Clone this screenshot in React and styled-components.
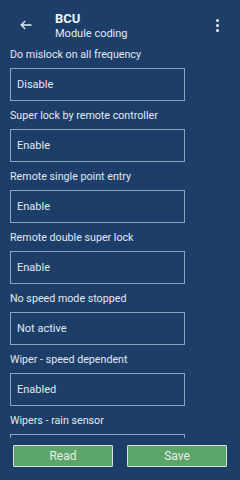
import React from 'react'
import styled, { createGlobalStyle } from 'styled-components'

const Global = createGlobalStyle`
html, body {
  margin: 0;
  padding: 0;
  background: #1c3e69;
}
* { box-sizing: border-box; }
`

const Screen = styled.div`
width: 240px;
height: 480px;
background: #1c3e69;
display: flex;
flex-direction: column;
font-family: Roboto, "Liberation Sans", sans-serif;
color: #e4eaf2;
overflow: hidden;
`

const Header = styled.div`
height: 47px;
display: flex;
align-items: center;
padding: 0 0 0 20px;
flex-shrink: 0;
`

const Back = styled.div`
width: 12px;
height: 12px;
display: flex;
align-items: center;
justify-content: center;
margin-top: 3px;
`

const Titles = styled.div`
flex: 1;
display: flex;
flex-direction: column;
margin-left: 23px;
margin-top: 5px;
`

const Title = styled.div`
font-size: 13px;
font-weight: 700;
line-height: 16px;
color: #f2f5f9;
`

const Sub = styled.div`
font-size: 11px;
line-height: 14px;
color: #e4eaf2;
`

const Menu = styled.div`
width: 4px;
display: flex;
flex-direction: column;
gap: 2px;
margin-right: 20px;
margin-top: 3px;
`

const Dot = styled.span`
width: 3px;
height: 3px;
border-radius: 50%;
background: #eef2f7;
`

const List = styled.div`
flex: 1;
overflow: hidden;
padding: 0 55px 0 10px;
`

const Field = styled.div`
display: flex;
flex-direction: column;
margin-bottom: 7px;
`

const Label = styled.div`
font-size: 10.7px;
line-height: 14px;
height: 21px;
padding-top: 1px;
color: #e2e8f0;
`

const Box = styled.div`
height: 33px;
border: 1px solid #8ea3bf;
display: flex;
align-items: center;
padding-left: 6px;
font-size: 11px;
color: #e2e8f0;
`

const Footer = styled.div`
height: 42px;
flex-shrink: 0;
display: flex;
gap: 14px;
padding: 7px 13px 13px 13px;
background: #1c3e69;
`

const Button = styled.button`
flex: 1;
height: 22px;
border: 1px solid #d3e4dc;
border-radius: 1px;
background: #5ba56a;
color: #e6efe2;
font-family: Roboto, "Liberation Sans", sans-serif;
font-size: 12px;
line-height: 20px;
padding: 0;
`

const fields = [
  ['Do mislock on all frequency', 'Disable'],
  ['Super lock by remote controller', 'Enable'],
  ['Remote single point entry', 'Enable'],
  ['Remote double super lock', 'Enable'],
  ['No speed mode stopped', 'Not active'],
  ['Wiper - speed dependent', 'Enabled'],
  ['Wipers - rain sensor', 'Enabled'],
]

function App() {
  return (
    <Screen>
      <Global />
      <Header>
        <Back>
          <svg width="12" height="10" viewBox="0 0 12 10" fill="none" stroke="#e8eef5" strokeWidth="1.3">
            <path d="M11.5 5H1.2M5.2 1L1.2 5l4 4" />
          </svg>
        </Back>
        <Titles>
          <Title>BCU</Title>
          <Sub>Module coding</Sub>
        </Titles>
        <Menu>
          <Dot />
          <Dot />
          <Dot />
        </Menu>
      </Header>
      <List>
        {fields.map(([label, value]) => (
          <Field key={label}>
            <Label>{label}</Label>
            <Box>{value}</Box>
          </Field>
        ))}
      </List>
      <Footer>
        <Button>Read</Button>
        <Button>Save</Button>
      </Footer>
    </Screen>
  )
}

export default App
